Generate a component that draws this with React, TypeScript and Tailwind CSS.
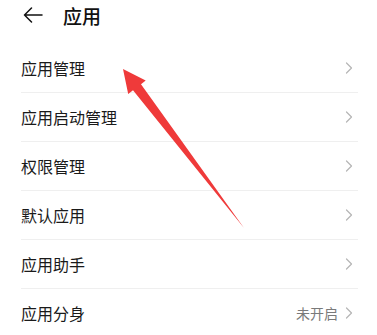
import React from "react";

const items: { label: string; value?: string }[] = [
  { label: "应用管理" },
  { label: "应用启动管理" },
  { label: "权限管理" },
  { label: "默认应用" },
  { label: "应用助手" },
  { label: "应用分身", value: "未开启" },
];

function Chevron() {
  return (
    <svg width="8" height="12" viewBox="0 0 8 12" fill="none">
      <path d="M1.5 1 L6.5 6 L1.5 11" stroke="#b5b5b5" strokeWidth="1.2" strokeLinecap="round" strokeLinejoin="round" />
    </svg>
  );
}

export default function App() {
  return (
    <div
      className="relative w-[377px] h-[335px] overflow-hidden bg-white text-[#1a1a1a]"
      style={{ fontFamily: '"Noto Sans CJK SC", "Noto Sans", sans-serif' }}
    >
      <div className="h-[44px] flex items-center pl-[23px] pb-[14px]">
        <svg width="20" height="16" viewBox="0 0 20 16" fill="none">
          <path d="M19 8 H1.5 M8.5 1 L1.5 8 L8.5 15" stroke="#111" strokeWidth="1.5" strokeLinecap="round" strokeLinejoin="round" />
        </svg>
        <span className="ml-[20px] text-[19px] leading-none text-[#111] font-medium">应用</span>
      </div>
      <div>
        {items.map((it) => (
          <div
            key={it.label}
            className="h-[49px] ml-[21px] mr-[19px] pr-[5px] border-b border-[#efefef] flex items-center justify-between"
          >
            <span className="text-[16px] leading-none">{it.label}</span>
            <div className="flex items-center gap-[7px]">
              {it.value && <span className="text-[14px] leading-none text-[#7a7a7a]">{it.value}</span>}
              <Chevron />
            </div>
          </div>
        ))}
      </div>
      <svg className="absolute left-0 top-0 pointer-events-none" width="377" height="335" viewBox="0 0 377 335">
        <polygon
          points="123,69 145.7,80.6 141,84.3 244,228 133,90.3 128.2,94"
          fill="#ef3a3a"
        />
      </svg>
    </div>
  );
}
